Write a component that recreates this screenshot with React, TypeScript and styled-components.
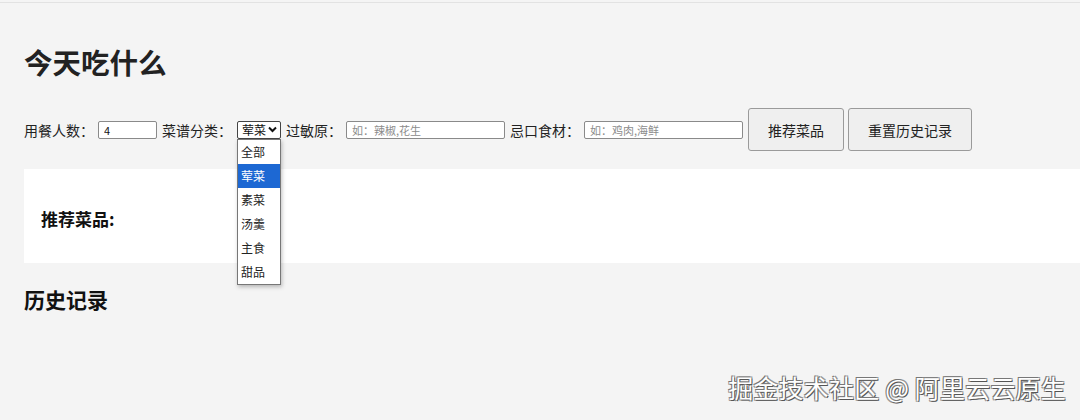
import React from 'react'
import styled, { createGlobalStyle } from 'styled-components'

const GlobalStyle = createGlobalStyle`
  html, body {
    margin: 0;
    padding: 0;
    background: #f4f4f4;
  }
  body {
    font-family: "Noto Sans CJK SC", "Noto Sans", sans-serif;
    color: #222;
  }
`

const categories = ['全部', '荤菜', '素菜', '汤羹', '主食', '甜品']

const App: React.FC = () => {
  return (
    <>
      <GlobalStyle />
      <Page>
        <Title>今天吃什么</Title>
        <FormRow>
          <Label>用餐人数：</Label>
          <TextInput type='number' defaultValue={4} width={59} />
          <Label>菜谱分类：</Label>
          <SelectWrap>
            <SelectBox>
              <span>荤菜</span>
              <svg width='9' height='7' viewBox='0 0 9 7'>
                <path d='M1 1.5 L4.5 5 L8 1.5' stroke='#111' strokeWidth='2' fill='none' />
              </svg>
            </SelectBox>
            <Menu>
              {categories.map((c) => (
                <Option key={c} active={c === '荤菜'}>
                  {c}
                </Option>
              ))}
            </Menu>
          </SelectWrap>
          <Label>过敏原：</Label>
          <TextInput placeholder='如：辣椒,花生' width={159} />
          <Label>忌口食材：</Label>
          <TextInput placeholder='如：鸡肉,海鲜' width={159} />
          <Button>推荐菜品</Button>
          <Button>重置历史记录</Button>
        </FormRow>
        <ResultBox>
          <ResultTitle>推荐菜品:</ResultTitle>
        </ResultBox>
        <HistoryTitle>历史记录</HistoryTitle>
      </Page>
      <Watermark>掘金技术社区 @ 阿里云云原生</Watermark>
    </>
  )
}

export default App

const Page = styled.div`
  margin-top: 2px;
  border-top: 1px solid #e2e2e2;
  padding: 39px 0 40px 24px;
  min-height: 376px;
  box-sizing: border-box;
`

const Title = styled.h1`
  margin: 0;
  font-size: 28.5px;
  line-height: 40px;
  font-weight: 700;
  color: #222;
`

const FormRow = styled.div`
  display: flex;
  align-items: center;
  margin-top: 26px;
  height: 43px;
`

const Label = styled.span`
  font-size: 14px;
  color: #222;
  margin-right: 4px;
  white-space: nowrap;
`

const TextInput = styled.input<{ width: number }>`
  width: ${(p) => p.width}px;
  height: 18px;
  box-sizing: border-box;
  border: 1px solid #8a8a8a;
  border-radius: 2px;
  background: #fff;
  padding: 0 5px;
  font-size: 11px;
  font-family: "Noto Sans CJK SC", sans-serif;
  color: #111;
  margin-right: 5px;
  outline: none;
  &::placeholder {
    color: #8c8c8c;
  }
  &::-webkit-inner-spin-button {
    display: none;
  }
`

const SelectWrap = styled.div`
  position: relative;
  margin-right: 5px;
  margin-left: 1px;
`

const SelectBox = styled.div`
  width: 44px;
  height: 18px;
  box-sizing: border-box;
  border: 1px solid #444;
  border-radius: 2px;
  background: #fff;
  display: flex;
  align-items: center;
  justify-content: space-between;
  padding: 0 3px 0 4px;
  font-size: 12px;
  color: #111;
`

const Menu = styled.div`
  position: absolute;
  top: 18px;
  left: 0;
  width: 44px;
  box-sizing: border-box;
  border: 1px solid #777;
  background: #fff;
  box-shadow: 1px 2px 4px rgba(0, 0, 0, 0.25);
  z-index: 10;
`

const Option = styled.div<{ active?: boolean }>`
  height: 24px;
  line-height: 24px;
  padding-left: 3px;
  font-size: 12px;
  color: ${(p) => (p.active ? '#fff' : '#222')};
  background: ${(p) => (p.active ? '#1d68d3' : '#fff')};
`

const Button = styled.button`
  height: 43px;
  box-sizing: border-box;
  padding: 0 19px;
  margin-right: 4px;
  border: 1px solid #9a9a9a;
  border-radius: 3px;
  background: #efefef;
  font-size: 14px;
  font-family: "Noto Sans CJK SC", sans-serif;
  color: #222;
  white-space: nowrap;
`

const ResultBox = styled.div`
  margin-top: 18px;
  height: 94px;
  background: #fff;
  display: flex;
  align-items: center;
  padding-left: 17px;
  padding-top: 4px;
  box-sizing: border-box;
`

const ResultTitle = styled.h3`
  margin: 0;
  font-size: 17px;
  font-weight: 700;
  color: #111;
`

const HistoryTitle = styled.h2`
  margin: 21px 0 0;
  font-size: 21px;
  line-height: 30px;
  font-weight: 700;
  color: #111;
`

const Watermark = styled.div`
  position: absolute;
  right: 14px;
  top: 369px;
  font-size: 25px;
  letter-spacing: 0.2px;
  color: #fff;
  font-family: "Noto Sans CJK SC", sans-serif;
  text-shadow: -1px -1px 0 #777, 1px 1px 0 #555, 1px -1px 0 #999, -1px 1px 0 #999;
`
